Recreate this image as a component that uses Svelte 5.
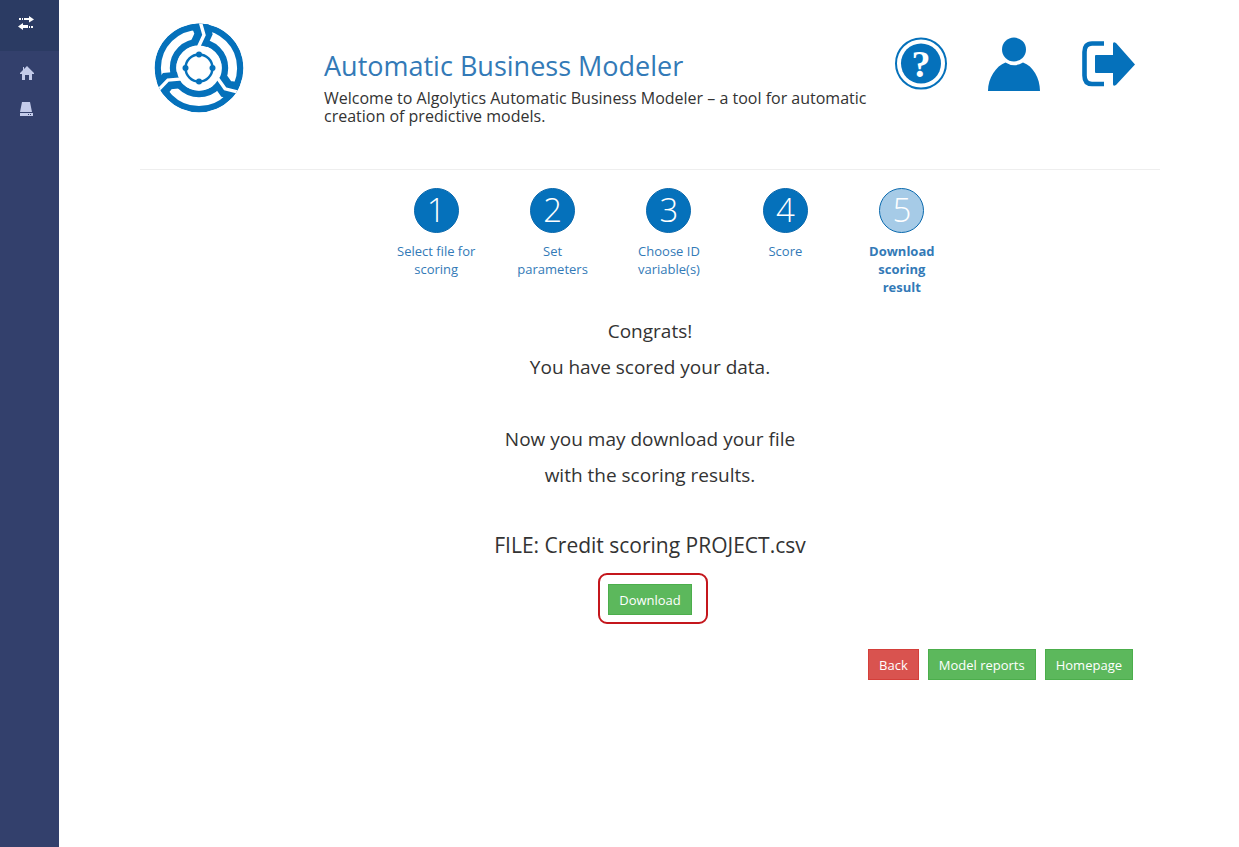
<script>
  const steps = [
    { number: 1, label: "Select file for scoring" },
    { number: 2, label: "Set parameters" },
    { number: 3, label: "Choose ID variable(s)" },
    { number: 4, label: "Score" },
    { number: 5, label: "Download scoring result" },
  ];
  let current = 5;
  let fileName = "Credit scoring PROJECT.csv";
</script>

<div class="page">
  <nav class="sidebar" aria-label="Main menu">
    <button class="toggle" aria-label="Toggle menu">
      <svg width="16" height="14" viewBox="0 0 16 14" fill="#fff">
        <path d="M1 2h2v2H1zM4 2h1v2H4zM6 2h5V0l5 3.500-5 3V4H6z" />
        <path d="M15 10h-2v2h2zM12 10h-1v2h1zM10 9H5V7l-5 3.500L5 14v-2h5z" />
      </svg>
    </button>
    <a href="#home" aria-label="Home">
      <svg width="14" height="14" viewBox="0 0 14 14" fill="#c3cbea">
        <path d="M7 0l7 7v1h-2v6H9v-5H5v5H2V8H0V7l3-3V1h1v2z" />
      </svg>
    </a>
    <a href="#data" aria-label="Data">
      <svg width="14" height="14" viewBox="0 0 14 14" fill="#c3cbea">
        <path d="M2 0h8l2 10H0zM0 11h13v3H0z" />
        <path d="M8 12h1v1H8zM10 12h1v1h-1z" fill="#33406c" />
      </svg>
    </a>
  </nav>

  <div class="content">
    <main>
      <header>
        <a class="logo" href="#home" aria-label="Algolytics">
          <svg width="90" height="90" viewBox="-45 -45 90 90" fill="none">
            <defs>
              <clipPath id="disc"><circle r="44.500" /></clipPath>
            </defs>
            <g clip-path="url(#disc)">
              <circle r="41.300" stroke="#0571bb" stroke-width="6.400" />
              <circle r="26" stroke="#0571bb" stroke-width="6.400" />
              {#each [0, 120, 240] as angle}
                <g transform="rotate({angle})">
                  <path d="M0 -46L4.500 -34L-1 -22" stroke="#0571bb" stroke-width="17" />
                  <path d="M1 -47L5 -33L-1 -20" stroke="#fff" stroke-width="3.400" />
                </g>
              {/each}
            </g>
            <circle r="22.500" fill="#fff" />
            <circle r="13.500" stroke="#0571bb" stroke-width="2.400" />
            {#each [0, 90, 180, 270] as angle}
              <circle cy="-13.500" r="3" fill="#0571bb" transform="rotate({angle})" />
            {/each}
          </svg>
        </a>
        <div class="intro">
          <h1>Automatic Business Modeler</h1>
          <p>Welcome to Algolytics Automatic Business Modeler – a tool for automatic creation of predictive models.</p>
        </div>
        <div class="actions">
          <a href="#help" aria-label="Help">
            <svg width="52" height="54" viewBox="0 0 52 54">
              <circle cx="26" cy="26.500" r="25" fill="#fff" stroke="#0571bb" stroke-width="2" />
              <circle cx="26" cy="26.500" r="20" fill="#0571bb" />
              <text x="26" y="40" text-anchor="middle" class="question">?</text>
            </svg>
          </a>
          <a href="#account" aria-label="Account">
            <svg width="52" height="54" viewBox="0 0 52 54" fill="#0571bb">
              <circle cx="26" cy="12.500" r="12" />
              <path d="M17.500 25.500Q26 31 35 25.500C45 29 52 41 52 54H0C0 41 8 29 17.500 25.500z" />
            </svg>
          </a>
          <a href="#logout" aria-label="Log out">
            <svg width="54" height="54" viewBox="0 0 54 54">
              <path d="M23 6.500H11Q3.500 6.500 3.500 15V38.500Q3.500 47 11 47H23" fill="none" stroke="#0571bb" stroke-width="4.600" />
              <path d="M15 18h17V7q0-3 3-1l19 21.500L35 48q-3 2-3-1V36H15q-1 0-1-1V19q0-1 1-1z" fill="#0571bb" />
            </svg>
          </a>
        </div>
      </header>

      <ol class="steps">
        {#each steps as step}
          <li class:active={step.number === current}>
            <a href="#step-{step.number}">
              <span class="number">{step.number}</span>
              <span>{step.label}</span>
            </a>
          </li>
        {/each}
      </ol>

      <section class="message">
        <p>Congrats!<br />You have scored your data.</p>
        <p>Now you may download your file<br />with the scoring results.</p>
        <p class="file">FILE: {fileName}</p>
        <div class="download">
          <button class="btn">Download</button>
        </div>
      </section>

      <div class="footer">
        <button class="btn danger">Back</button>
        <button class="btn">Model reports</button>
        <button class="btn">Homepage</button>
      </div>
    </main>
  </div>
</div>

<style>
  :global(body) {
    margin: 0;
    background: #fff;
    color: #333;
    font-family: "Open Sans", sans-serif;
    font-size: 13px;
  }

  a {
    color: #337ab7;
    text-decoration: none;
  }

  .page {
    display: flex;
    min-height: 100vh;
  }

  /* sidebar */
  .sidebar {
    width: 59px;
    flex-shrink: 0;
    background: #33406c;
  }

  .sidebar a,
  .toggle {
    display: flex;
    align-items: center;
    box-sizing: border-box;
    width: 100%;
    height: 36px;
    padding: 0 0 0 20px;
  }

  .toggle {
    height: 51px;
    padding: 0 0 6px 18px;
    margin-bottom: 4px;
    border: 0;
    background: #2b3b63;
    cursor: pointer;
  }

  .content {
    flex: 1;
    padding-left: 2px;
  }

  main {
    max-width: 1020px;
    margin: 0 auto;
  }

  header {
    display: flex;
    box-sizing: border-box;
    height: 170px;
    padding: 23px 25px 0 14px;
    border-bottom: 1px solid #eee;
  }

  .logo {
    flex-shrink: 0;
    margin-right: 80px;
  }

  .intro {
    flex: 1;
    padding-top: 27px;
  }

  h1 {
    margin: 0 0 7px;
    color: #337ab7;
    font-size: 27px;
    font-weight: 400;
    line-height: 32px;
  }

  .intro p {
    max-width: 560px;
    margin: 0;
    font-size: 16px;
    line-height: 18px;
  }

  .actions {
    display: flex;
    gap: 41px;
    padding-top: 14px;
  }

  .question {
    fill: #fff;
    font-family: "Liberation Serif", serif;
    font-size: 38px;
    font-weight: 700;
  }

  /* wizard steps */
  .steps {
    display: grid;
    grid-template-columns: repeat(5, 1fr);
    gap: 36px;
    max-width: 546px;
    margin: 18px auto 0;
    padding: 0 0 0 38px;
    list-style: none;
    line-height: 18px;
    text-align: center;
  }

  .number {
    display: block;
    box-sizing: border-box;
    width: 45px;
    height: 45px;
    margin: 0 auto 9px;
    border: 1px solid #0a69ad;
    border-radius: 50%;
    background: #0571bb;
    color: #fff;
    font-size: 33px;
    font-weight: 300;
    line-height: 42px;
  }

  .active {
    font-weight: 700;
  }

  .active .number {
    background: #a6cbe7;
    font-weight: 300;
  }

  .message {
    margin-top: 17px;
    font-size: 19px;
    line-height: 36px;
    text-align: center;
  }

  .message p {
    margin: 0 0 36px;
  }

  .message .file {
    margin: -2px 0 21px;
    font-size: 21px;
  }

  .btn {
    height: 31px;
    padding: 0 10px;
    border: 1px solid #4cae4c;
    background: #5cb85c;
    color: #fff;
    font-family: inherit;
    font-size: 13px;
    cursor: pointer;
  }

  .danger {
    border-color: #d43f3a;
    background: #d9534f;
  }

  .download {
    position: relative;
    display: flex;
    width: max-content;
    margin: 0 auto;
  }

  .download::after {
    content: "";
    position: absolute;
    inset: -11px -16px -9px -10px;
    border: 2px solid #c4161c;
    border-radius: 9px;
    pointer-events: none;
  }

  .footer {
    display: flex;
    justify-content: flex-end;
    gap: 9px;
    padding: 34px 27px 0 0;
  }
</style>
